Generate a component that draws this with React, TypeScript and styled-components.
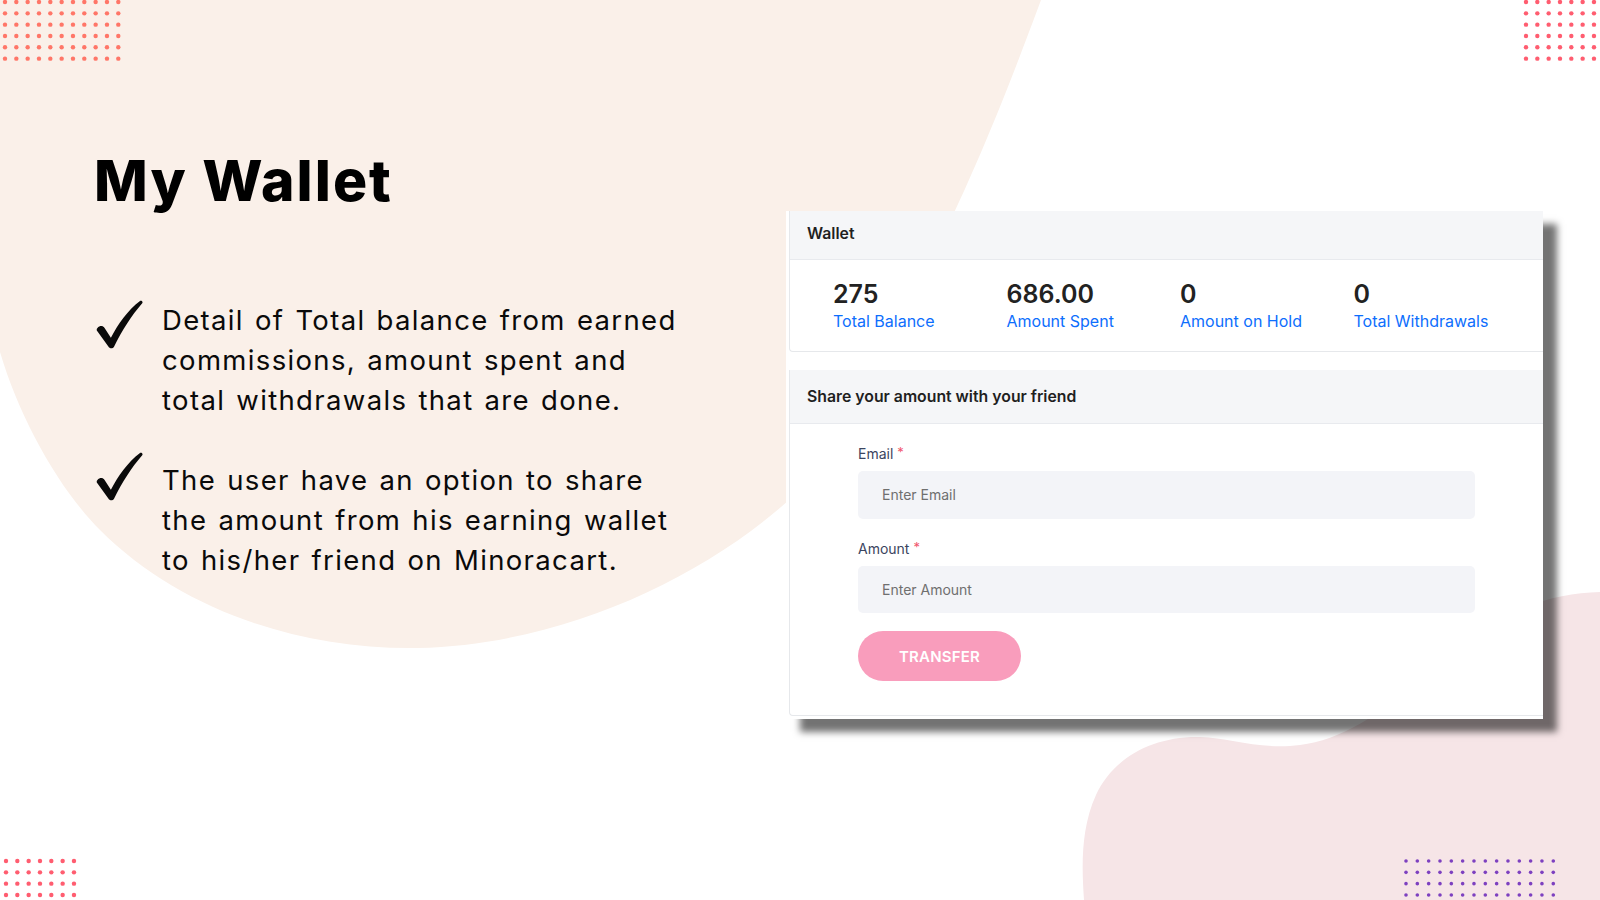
import React from "react";
import styled, { createGlobalStyle } from "styled-components";

const GlobalStyle = createGlobalStyle`
  html, body { margin: 0; padding: 0; background: #ffffff; }
  body { font-family: Inter, "Open Sans", Arial, sans-serif; overflow: hidden; }
  * { box-sizing: border-box; }
`;

const Page = styled.div`
  position: relative;
  width: 1600px;
  height: 900px;
  overflow: hidden;
  background: #ffffff;
`;

const Backdrop = styled.svg`
  position: absolute;
  left: 0;
  top: 0;
  width: 1600px;
  height: 900px;
  z-index: 0;
`;

const DotsSvg = styled.svg<{ $left: number; $top: number }>`
  position: absolute;
  left: ${(p) => p.$left}px;
  top: ${(p) => p.$top}px;
  z-index: 0;
  overflow: visible;
`;

type DotGridProps = {
  left: number;
  top: number;
  cols: number;
  rows: number;
  color: string;
  r?: number;
  step?: number;
};

const DotGrid = ({ left, top, cols, rows, color, r = 2.2, step = 11.33 }: DotGridProps) => {
  const dots: React.ReactNode[] = [];
  for (let j = 0; j < rows; j++) {
    for (let i = 0; i < cols; i++) {
      dots.push(<circle key={`${i}-${j}`} cx={i * step} cy={j * step} r={r} fill={color} />);
    }
  }
  return (
    <DotsSvg
      $left={left}
      $top={top}
      width={(cols - 1) * step + 1}
      height={(rows - 1) * step + 1}
      aria-hidden="true"
    >
      {dots}
    </DotsSvg>
  );
};

const Content = styled.div`
  position: relative;
  z-index: 1;
  display: flex;
  align-items: flex-start;
  height: 100%;
`;

const Intro = styled.section`
  width: 786px;
  flex: none;
  padding: 152px 0 0 94px;
`;

const Title = styled.h1`
  margin: 0;
  font-family: Inter, Arial, sans-serif;
  font-weight: 800;
  font-size: 57px;
  line-height: 57px;
  letter-spacing: 2px;
  color: #000000;
`;

const Points = styled.ul`
  list-style: none;
  margin: 91px 0 0;
  padding: 0 0 0 2px;
  display: flex;
  flex-direction: column;
  gap: 40px;
`;

const Point = styled.li`
  display: flex;
  align-items: flex-start;
  gap: 19px;
`;

const CheckSvg = styled.svg<{ $shift: number }>`
  flex: none;
  width: 47px;
  height: 49px;
  margin-top: ${(p) => p.$shift}px;
`;

const PointText = styled.p`
  margin: 0;
  font-family: Inter, Arial, sans-serif;
  font-size: 27.5px;
  line-height: 40px;
  font-weight: 400;
  letter-spacing: 1.35px;
  word-spacing: 2px;
  color: #0a0a0a;
  white-space: nowrap;
`;

const Check = ({ shift }: { shift: number }) => (
  <CheckSvg $shift={shift} viewBox="0 0 48 50" aria-hidden="true">
    <path
      d="M1.5 28.5 C3.5 26.2 6.8 25.8 8.6 28.2 L15.2 38.6 C22.5 24.5 32.5 10.5 44.6 1.2 C46.2 0 48.4 1.6 47.2 3.2 C36.5 15.5 26.5 31 18.4 47.6 C17.2 49.8 14 49.9 12.8 47.8 L1.2 31.6 C0.4 30.6 0.6 29.4 1.5 28.5 Z"
      fill="#0a0a0a"
    />
  </CheckSvg>
);

const WalletFrame = styled.div`
  margin-top: 211px;
  width: 757px;
  height: 508px;
  flex: none;
  background: #ffffff;
  padding: 0 0 3px 3px;
  box-shadow: 14px 13px 7px rgba(0, 0, 0, 0.55);
  display: flex;
  flex-direction: column;
  gap: 18px;
  font-family: Inter, Arial, sans-serif;
`;

const Panel = styled.div<{ $grow?: boolean }>`
  border-left: 1px solid #e6e8eb;
  border-bottom: 1px solid #e6e8eb;
  border-radius: 0 0 0 4px;
  flex: ${(p) => (p.$grow ? "1" : "none")};
  display: flex;
  flex-direction: column;
`;

const PanelHeader = styled.div<{ $h: number; $lift: number }>`
  height: ${(p) => p.$h}px;
  flex: none;
  background: #f5f6f8;
  border-bottom: 1px solid #e8eaee;
  display: flex;
  align-items: center;
  padding: 0 17px ${(p) => p.$lift}px;
  font-size: 15.8px;
  font-weight: 600;
  color: #1f1f1f;
`;

const Stats = styled.div`
  display: grid;
  grid-template-columns: repeat(4, 173.5px);
  height: 91px;
  padding: 19px 0 0 43px;
`;

const Stat = styled.div`
  display: flex;
  flex-direction: column;
`;

const StatValue = styled.div`
  font-size: 25px;
  line-height: 30px;
  font-weight: 600;
  color: #222222;
`;

const StatLabel = styled.div`
  margin-top: 1px;
  font-size: 16px;
  line-height: 22px;
  color: #0d6efd;
`;

const Form = styled.form`
  display: flex;
  flex-direction: column;
  padding: 18px 68px 0;
`;

const Field = styled.div`
  display: flex;
  flex-direction: column;
  margin-bottom: 18px;
`;

const Label = styled.label`
  font-size: 14px;
  line-height: 21px;
  color: #3b4560;
  margin-bottom: 7px;
`;

const Required = styled.span`
  color: #f1556c;
  font-size: 13px;
  margin-left: 4px;
  vertical-align: 2px;
`;

const Input = styled.input`
  height: 47.5px;
  border: none;
  outline: none;
  background: #f3f4f8;
  border-radius: 5px;
  padding: 0 24px;
  font-family: Inter, Arial, sans-serif;
  font-size: 14px;
  color: #333;
  &::placeholder {
    color: #6f6f6f;
  }
`;

const TransferButton = styled.button`
  width: 163px;
  height: 50px;
  border: none;
  border-radius: 25px;
  background: #f99dbc;
  color: #ffffff;
  font-family: Inter, Arial, sans-serif;
  font-size: 15px;
  font-weight: 600;
  letter-spacing: 0.2px;
  cursor: pointer;
`;

const stats = [
  { value: "275", label: "Total Balance" },
  { value: "686.00", label: "Amount Spent" },
  { value: "0", label: "Amount on Hold" },
  { value: "0", label: "Total Withdrawals" },
];

export default function App() {
  return (
    <Page>
      <GlobalStyle />
      <Backdrop viewBox="0 0 1600 900" aria-hidden="true">
        <path
          d="M0 0 L1041 0 C1000 110 930 300 789 500 C700 580 560 645 418 648 C300 650 180 610 100 530 C60 490 20 420 0 352 Z"
          fill="#faf0e9"
        />
        <path
          d="M1600 592 C1540 593 1480 620 1420 680 C1380 715 1340 740 1300 745 C1260 750 1230 738 1200 737 C1150 736 1112 760 1096 795 C1080 830 1082 870 1084 900 L1600 900 Z"
          fill="#f6e5e7"
        />
      </Backdrop>
      <DotGrid left={4.7} top={1.7} cols={11} rows={6} color="#ff7668" />
      <DotGrid left={1526} top={1.7} cols={7} rows={6} color="#ff5d70" />
      <DotGrid left={5.7} top={861} cols={7} rows={4} color="#ff5d70" />
      <DotGrid left={1405.7} top={861} cols={14} rows={4} color="#7d40c0" r={1.8} />
      <Content>
        <Intro>
          <Title>My Wallet</Title>
          <Points>
            <Point>
              <Check shift={0} />
              <PointText>
                Detail of Total balance from earned
                <br />
                commissions, amount spent and
                <br />
                total withdrawals that are done.
              </PointText>
            </Point>
            <Point>
              <Check shift={-8} />
              <PointText>
                The user have an option to share
                <br />
                the amount from his earning wallet
                <br />
                to his/her friend on Minoracart.
              </PointText>
            </Point>
          </Points>
        </Intro>
        <WalletFrame>
          <Panel>
            <PanelHeader $h={49} $lift={3}>
              Wallet
            </PanelHeader>
            <Stats>
              {stats.map((s) => (
                <Stat key={s.label}>
                  <StatValue>{s.value}</StatValue>
                  <StatLabel>{s.label}</StatLabel>
                </Stat>
              ))}
            </Stats>
          </Panel>
          <Panel $grow>
            <PanelHeader $h={54} $lift={0}>
              Share your amount with your friend
            </PanelHeader>
            <Form onSubmit={(e) => e.preventDefault()}>
              <Field>
                <Label>
                  Email<Required>*</Required>
                </Label>
                <Input type="email" placeholder="Enter Email" />
              </Field>
              <Field>
                <Label>
                  Amount<Required>*</Required>
                </Label>
                <Input type="text" placeholder="Enter Amount" />
              </Field>
              <div>
                <TransferButton type="button">TRANSFER</TransferButton>
              </div>
            </Form>
          </Panel>
        </WalletFrame>
      </Content>
    </Page>
  );
}
